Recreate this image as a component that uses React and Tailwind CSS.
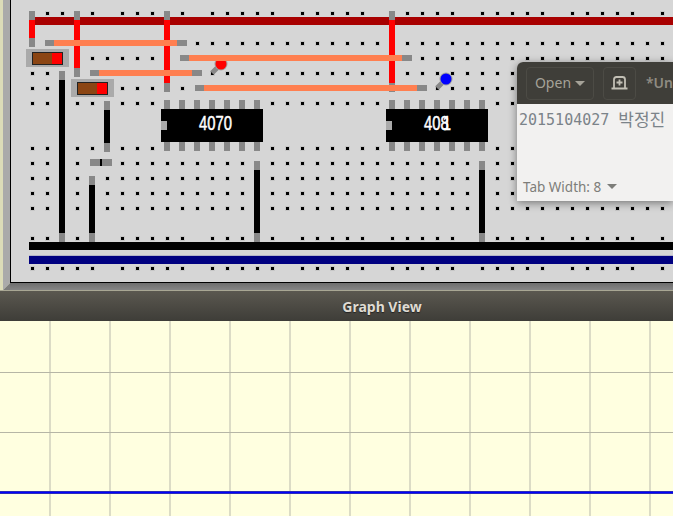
const columns = Array.from({ length: 43 }, (_, i) => 32 + i * 15);
const railColumns = columns.filter((x) => (x - 32) % 90 !== 75);
const innerRows = [43, 58, 73, 88, 103, 148, 163, 178, 193, 208];
const railRows = [13, 238, 268];

const dots = [
  ...innerRows.flatMap((y) => columns.map((x) => [x, y])),
  ...railRows.flatMap((y) => railColumns.map((x) => [x, y])),
];

// x, top, bottom, colour of the wire between the grey ends
const verticals = [
  [29, 11, 47, "#ff0000"],
  [74, 11, 77, "#ff0000"],
  [164, 11, 92, "#ff0000"],
  [389, 11, 92, "#ff0000"],
  [59, 71, 242, "#000000"],
  [104, 101, 152, "#000000"],
  [89, 176, 242, "#000000"],
  [254, 161, 242, "#000000"],
  [479, 161, 242, "#000000"],
];

// y, left, right
const jumpers = [
  [40, 45, 187],
  [55, 180, 412],
  [70, 90, 202],
  [85, 195, 427],
];

const legs = [0, 15, 30, 45, 60, 75, 90];

const Resistor = ({ x, y }) => (
  <g>
    <rect x={x} y={y} width={43} height={18} fill="#aaaaaa" />
    <rect x={x + 6} y={y + 3} width={31} height={13} fill="#222222" />
    <rect x={x + 7} y={y + 4} width={19} height={11} fill="#8b4513" />
    <rect x={x + 26} y={y + 4} width={10} height={11} fill="#ff0000" />
  </g>
);

const Led = ({ cx, cy, color }) => (
  <g>
    <line x1={cx} y1={cy} x2={cx - 9} y2={cy + 9} stroke="#888888" strokeWidth={5} />
    <circle cx={cx} cy={cy} r={6.5} fill="#a0a0a0" />
    <circle cx={cx} cy={cy} r={5.5} fill={color} />
  </g>
);

const ChipLabel = ({ x, children }) => (
  <text
    transform={`translate(${x} 130) scale(0.76 1)`}
    fill="#ffffff"
    stroke="#ffffff"
    strokeWidth={0.5}
    fontSize={19.5}
    fontFamily="'Liberation Sans', sans-serif"
    shapeRendering="auto"
  >
    {children}
  </text>
);

const Chip = ({ x, children }) => (
  <g>
    {legs.map((offset) => (
      <g key={offset} fill="#888888">
        <rect x={x + 3 + offset} y={100} width={6} height={9} />
        <rect x={x + 3 + offset} y={142} width={6} height={9} />
      </g>
    ))}
    <rect x={x} y={109} width={102} height={33} fill="#000000" />
    <rect x={x} y={121} width={6} height={9} fill="#aaaaaa" />
    {children}
  </g>
);

const Board = () => (
  <svg className="block h-[282px] w-[662px]" viewBox="11 0 662 282" shapeRendering="crispEdges">
    {dots.map(([x, y]) => (
      <g key={`${x}-${y}`}>
        <rect x={x - 2} y={y - 2} width={5} height={5} fill="#c6c6c6" />
        <rect x={x - 1} y={y - 1} width={3} height={3} fill="#000000" />
      </g>
    ))}
    <rect x={32} y={17} width={641} height={8} fill="#a80000" />
    <rect x={29} y={242} width={644} height={8} fill="#000000" />
    <rect x={29} y={255} width={644} height={1} fill="#b4b4c8" />
    <rect x={29} y={256} width={644} height={8} fill="#000080" />
    {verticals.map(([x, top, bottom, color]) => (
      <g key={`${x}-${top}`}>
        <rect x={x} y={top} width={6} height={bottom - top} fill="#888888" />
        <rect x={x} y={top + 9} width={6} height={bottom - top - 18} fill={color} />
      </g>
    ))}
    <Chip x={161}>
      <ChipLabel x={199}>4070</ChipLabel>
    </Chip>
    <Chip x={386}>
      <ChipLabel x={424}>
        40
        <tspan>8</tspan>
        <tspan dx={-8}>1</tspan>
      </ChipLabel>
    </Chip>
    <g shapeRendering="auto">
      <Led cx={221} cy={64} color="#ff0000" />
      <Led cx={446} cy={79} color="#0000ff" />
    </g>
    {jumpers.map(([y, left, right]) => (
      <g key={y}>
        <rect x={left} y={y} width={right - left} height={6} fill="#888888" />
        <rect x={left + 9} y={y} width={right - left - 19} height={6} fill="#ff7f50" />
      </g>
    ))}
    <Resistor x={26} y={49} />
    <Resistor x={71} y={79} />
    <rect x={90} y={159} width={22} height={7} fill="#888888" />
    <rect x={100} y={159} width={2} height={7} fill="#000000" />
  </svg>
);

const Graph = () => (
  <svg className="block h-[195px] w-[673px]" viewBox="0 321 673 195" shapeRendering="crispEdges">
    {[50, 110, 170, 230, 290, 350, 410, 470, 530, 590, 650].map((x) => (
      <rect key={x} x={x - 1} y={321} width={2} height={195} fill="#dcdcc6" />
    ))}
    {[372, 432].map((y) => (
      <rect key={y} x={0} y={y} width={673} height={1} fill="#b6b6a6" />
    ))}
    <rect x={0} y={491} width={673} height={3} fill="#2a2ab8" />
    <rect x={0} y={492} width={673} height={1} fill="#0000ff" />
  </svg>
);

const EditorWindow = () => (
  <div className="absolute left-[517px] top-[62px] flex h-[139px] w-[156px] flex-col overflow-hidden rounded-tl-[6px] bg-[#f2f1f0] shadow-[0_2px_8px_rgba(0,0,0,0.45)]">
    <div className="flex h-[42px] items-center bg-[#3f3e39] pl-[9px]">
      <div className="flex h-[33px] w-[68px] items-center justify-center gap-[4px] rounded-[4px] border border-[#4c4b45] pb-[2px] text-[14px] text-[#a5a298]">
        <span>Open</span>
        <span className="mt-[2px] h-0 w-0 border-x-[5px] border-t-[5px] border-x-transparent border-t-[#a5a298]"></span>
      </div>
      <div className="ml-[9px] flex h-[33px] w-[33px] items-center justify-center rounded-[4px] border border-[#4c4b45]">
        <svg width="17" height="14" viewBox="0 0 17 14" fill="none" stroke="#c2bfb5" strokeWidth="1.8">
          <path d="M3 12V3.5Q3 1 5.5 1h6Q14 1 14 3.5V12" />
          <path d="M0.5 12.5h16" />
          <path d="M8.5 3.5v6M5.5 6.5h6" />
        </svg>
      </div>
      <span className="ml-[10px] whitespace-nowrap pb-[2px] text-[14px] font-semibold text-[#8f8c83]">*Un</span>
    </div>
    <div className="flex flex-1 flex-col justify-between">
      <div className="flex items-center gap-[9px] whitespace-nowrap pl-[2px] pt-[2px] text-[#7b8389]">
        <span className="pt-[2px] font-['DejaVu_Sans_Mono',monospace] text-[15px]">2015104027</span>
        <span className="font-['Noto_Sans_CJK_KR','Noto_Sans',sans-serif] text-[17px]">박정진</span>
      </div>
      <div className="flex items-center gap-[6px] pb-[4px] pl-[6px] text-[13.5px] text-[#7d7d79]">
        <span>Tab Width: 8</span>
        <span className="h-0 w-0 border-x-[5px] border-t-[5px] border-x-transparent border-t-[#7d7d79]"></span>
      </div>
    </div>
  </div>
);

export default function App() {
  return (
    <div className="relative flex h-[516px] w-[673px] flex-col overflow-hidden bg-[#ffffe0] font-['Noto_Sans',sans-serif]">
      <div className="flex h-[283px]">
        <div className="w-[3px] bg-[#dcdcb8]"></div>
        <div className="w-[7px] bg-[#aaaaaa]"></div>
        <div className="flex-1 border-b border-l border-black bg-[#d6d6d6]">
          <Board />
        </div>
      </div>
      <div className="flex h-[7px]">
        <svg className="block h-[7px] w-[10px]" viewBox="0 0 10 7">
          <rect width="3" height="7" fill="#dcdcb8" />
          <polygon points="3,0 10,0 3,7" fill="#aaaaaa" />
          <polygon points="10,0 10,7 3,7" fill="#7c7c7c" />
        </svg>
        <div className="flex-1 bg-gradient-to-b from-[#6e6e6e] to-[#858585]"></div>
      </div>
      <div className="flex h-[31px] items-center justify-center border-t border-[#a9a794] bg-gradient-to-b from-[#5b5850] to-[#3e3d38] pl-[91px] text-[14px] font-bold text-[#dfdbd2] [text-shadow:0_1px_1px_#222]">
        Graph View
      </div>
      <Graph />
      <EditorWindow />
    </div>
  );
}
